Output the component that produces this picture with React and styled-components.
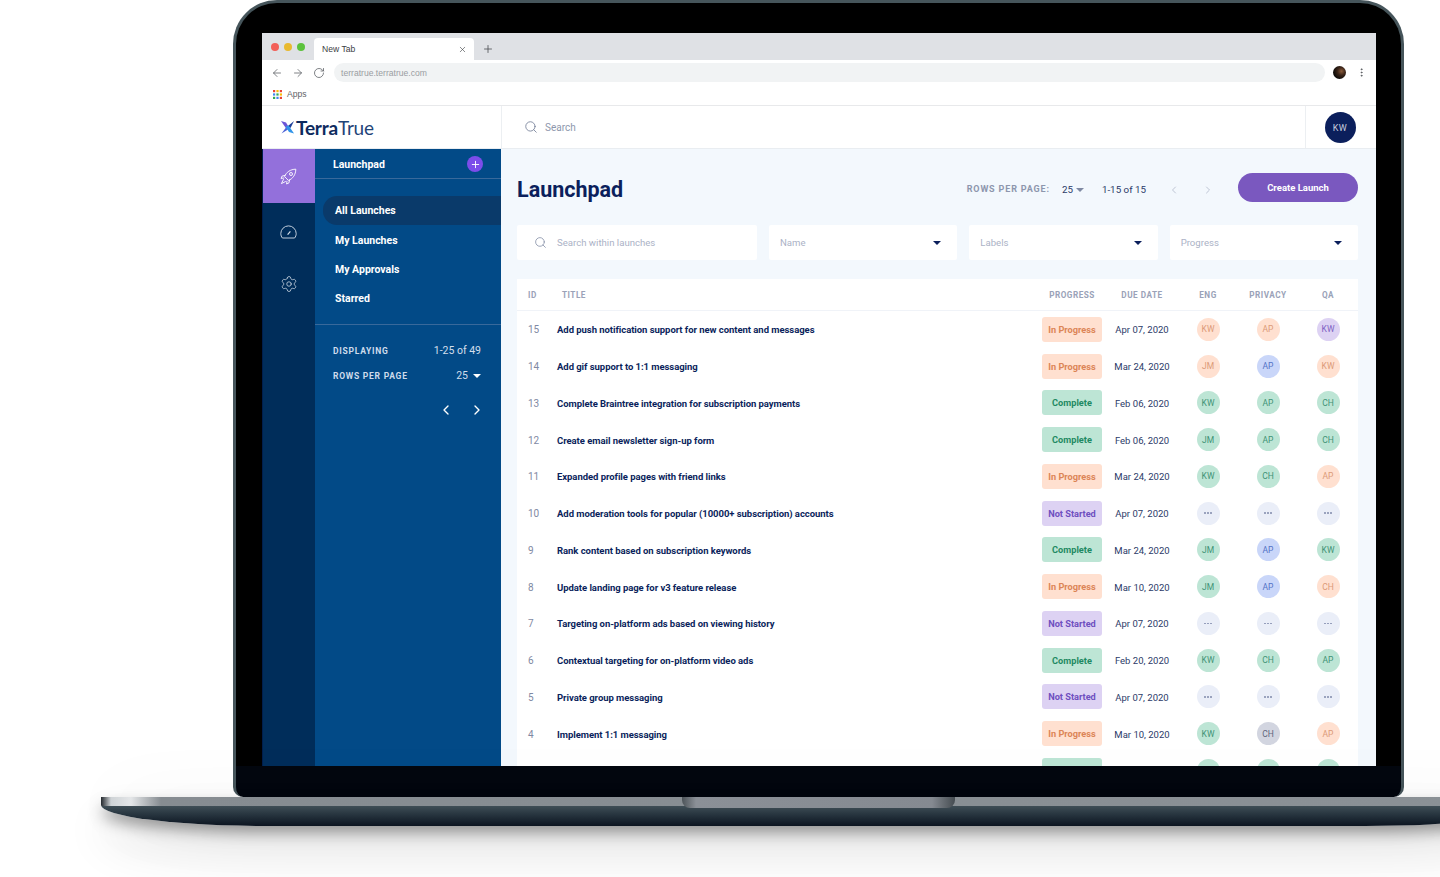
import React from 'react'
import styled, { createGlobalStyle } from 'styled-components'
import {
  ArrowLeft,
  ArrowRight,
  RotateCw,
  X,
  Plus,
  MoreVertical,
  Search,
  Settings,
  ChevronLeft,
  ChevronRight,
} from 'lucide-react'

const Global = createGlobalStyle`
  html, body {
    margin: 0;
    background: #fff;
    overflow: hidden;
  }
  * { box-sizing: border-box; }
`

const FONT = `Roboto, "Open Sans", sans-serif`
const NAVY = '#0b1f5c'

const Stage = styled.div`
  width: 1440px;
  height: 877px;
  overflow: hidden;
  font-family: ${FONT};
  display: flex;
  flex-direction: column;
`

const Lid = styled.div`
  width: 1171px;
  height: 797px;
  margin-left: 233px;
  flex-shrink: 0;
  padding: 30px 25px 31px 26px;
  border: 3px solid #46555b;
  border-bottom: none;
  border-radius: 44px 44px 10px 10px;
  background: linear-gradient(#000 0, #000 763px, #03070f 763px);
`

const Screen = styled.div`
  height: 733px;
  background: #fff;
  display: flex;
  flex-direction: column;
  overflow: hidden;
`

const Base = styled.div`
  width: 1434px;
  height: 29px;
  margin-left: 101px;
  flex-shrink: 0;
  display: flex;
  justify-content: center;
  border-radius: 0 0 170px 170px / 0 0 21px 21px;
  background:
    linear-gradient(90deg, #23282d 0, #cfd3d6 10px, #e4e6e8 30px, #868c91 60px, #8b9196 100%) top / 100% 9px no-repeat,
    linear-gradient(#3f4e56 9px, #2b3943 16px, #0b1420 100%);
  box-shadow:
    0 8px 16px -2px rgba(0, 0, 0, 0.42),
    0 26px 46px rgba(0, 0, 0, 0.12),
    0 0 70px rgba(0, 0, 0, 0.05);
`

const Hinge = styled.div`
  width: 273px;
  height: 11px;
  border-radius: 0 0 8px 8px;
  background: linear-gradient(90deg, #4d5459 0, #8b9097 14px, #858a91 250px, #454c51 100%);
`

/* browser chrome */
const TabStrip = styled.div`
  height: 27px;
  flex-shrink: 0;
  background: #dfe1e5;
  display: flex;
  align-items: flex-end;
  padding-left: 9px;
`

const Lights = styled.div`
  display: flex;
  gap: 5px;
  width: 43px;
  align-self: flex-start;
  margin-top: 10px;
`

const Light = styled.span`
  width: 8px;
  height: 8px;
  border-radius: 50%;
  background: ${(p) => p.$color};
`

const Tab = styled.div`
  width: 160px;
  height: 22px;
  background: #fff;
  border-radius: 4px 4px 0 0;
  padding: 0 7px 0 8px;
  display: flex;
  align-items: center;
  justify-content: space-between;
  font: 8.6px 'Liberation Sans', sans-serif;
  color: #3c4043;
`

const NewTab = styled.div`
  width: 28px;
  height: 22px;
  display: flex;
  align-items: center;
  justify-content: center;
  color: #4a4d52;
`

const Toolbar = styled.div`
  height: 25px;
  flex-shrink: 0;
  display: flex;
  align-items: center;
  padding-left: 9px;
  color: #5f6368;
`

const NavIcons = styled.div`
  width: 63px;
  display: flex;
  gap: 9px;
`

const Url = styled.div`
  width: 991px;
  height: 19px;
  border-radius: 10px;
  background: #f1f3f4;
  padding-left: 7px;
  display: flex;
  align-items: center;
  font: 8.6px 'Liberation Sans', sans-serif;
  color: #9a9da2;
`

const Profile = styled.span`
  width: 13px;
  height: 13px;
  margin-left: 8px;
  border-radius: 50%;
  background: radial-gradient(circle at 65% 40%, #8a5a3a 0, #3a2418 35%, #0d0a08 70%);
`

const Kebab = styled.div`
  margin-left: 10px;
  display: flex;
  color: #55585c;
`

const Bookmarks = styled.div`
  height: 21px;
  flex-shrink: 0;
  display: flex;
  align-items: center;
  gap: 5px;
  padding: 0 0 2px 11px;
  font: 8.6px 'Liberation Sans', sans-serif;
  color: #5f6368;
  border-bottom: 1px solid #e8e9eb;
`

/* app header */
const AppHeader = styled.header`
  height: 43px;
  flex-shrink: 0;
  display: flex;
  border-bottom: 1px solid #e9edf1;
`

const LogoCell = styled.div`
  width: 240px;
  display: flex;
  align-items: center;
  gap: 2px;
  padding-left: 19px;
  border-right: 1px solid #eceff2;
`

const LogoText = styled.span`
  font-family: Lato, sans-serif;
  font-size: 19px;
  line-height: 1;
  color: #0d2a5e;
  letter-spacing: -0.2px;
  b { font-weight: 700; }
  span { font-weight: 400; color: #1f4478; }
`

const HeaderSearch = styled.div`
  flex: 1;
  display: flex;
  align-items: center;
  gap: 7px;
  padding-left: 22px;
  font-size: 10px;
  color: #8e97ad;
`

const UserCell = styled.div`
  width: 71px;
  display: flex;
  align-items: center;
  justify-content: center;
  padding: 1px 2px 0 0;
  border-left: 1px solid #eceff2;
`

const UserAvatar = styled.div`
  width: 31px;
  height: 31px;
  border-radius: 50%;
  background: ${NAVY};
  color: #c4cbdc;
  font-size: 9px;
  letter-spacing: 0.5px;
  display: flex;
  align-items: center;
  justify-content: center;
`

/* app body */
const AppBody = styled.div`
  flex: 1;
  min-height: 0;
  display: flex;
`

const Rail = styled.nav`
  width: 53px;
  flex-shrink: 0;
  background: #002d5a;
  border-left: 1px solid #001e4d;
  display: flex;
  flex-direction: column;
  align-items: center;
  color: #d5dfea;
`

const RailItem = styled.div`
  width: 100%;
  height: ${(p) => (p.$active ? 54 : 52)}px;
  padding-right: 1px;
  display: flex;
  align-items: center;
  justify-content: center;
  background: ${(p) => (p.$active ? '#9370db' : 'transparent')};
`

const RailSpacer = styled.div`
  height: 3px;
`

const Panel = styled.aside`
  width: 186px;
  flex-shrink: 0;
  background: #024a87;
  color: #fff;
`

const PanelHead = styled.div`
  height: 30px;
  padding: 1px 18px 0;
  display: flex;
  align-items: center;
  justify-content: space-between;
  border-bottom: 1px solid #39699b;
  font-size: 10.5px;
  font-weight: 700;
`

const PlusBadge = styled.span`
  width: 16px;
  height: 16px;
  border-radius: 50%;
  background: #7c4dea;
  display: flex;
  align-items: center;
  justify-content: center;
`

const NavList = styled.div`
  padding: 17px 0 10px 8px;
  border-bottom: 1px solid #39699b;
  display: flex;
  flex-direction: column;
`

const NavItem = styled.div`
  height: 29.4px;
  padding-left: 12px;
  display: flex;
  align-items: center;
  font-size: 10.5px;
  font-weight: 700;
  border-radius: 14px 0 0 14px;
  background: ${(p) => (p.$active ? '#0a3a6a' : 'transparent')};
`

const Meta = styled.div`
  padding: 18px 20px 0 18px;
  display: flex;
  flex-direction: column;
  gap: 9px;
`

const MetaRow = styled.div`
  height: 16px;
  display: flex;
  align-items: center;
  justify-content: space-between;
  font-size: 10.5px;
  color: #d2deeb;
`

const MetaLabel = styled.span`
  font-size: 8.5px;
  font-weight: 700;
  letter-spacing: 0.75px;
  color: #cfdcec;
`

const Caret = styled.span`
  display: inline-block;
  width: 0;
  height: 0;
  margin-left: ${(p) => p.$gap ?? 5}px;
  vertical-align: middle;
  border-left: 4px solid transparent;
  border-right: 4px solid transparent;
  border-top: 4px solid ${(p) => p.$color ?? NAVY};
`

const PanelArrows = styled.div`
  margin-top: 18px;
  padding-right: 16px;
  display: flex;
  justify-content: flex-end;
  gap: 15px;
`

/* main */
const Main = styled.main`
  flex: 1;
  min-width: 0;
  background: #f3f8fd;
  padding: 24px 18px 0 16px;
`

const TopRow = styled.div`
  height: 32px;
  display: flex;
  align-items: center;
`

const Title = styled.h1`
  margin: 0;
  flex: 1;
  font-size: 21.5px;
  font-weight: 700;
  color: ${NAVY};
`

const PagerLabel = styled.span`
  font-size: 9px;
  font-weight: 700;
  letter-spacing: 0.85px;
  color: #8d96ad;
`

const PagerValue = styled.span`
  font-size: 9.8px;
  color: #2b3a68;
  margin-left: ${(p) => p.$gap}px;
`

const PagerArrows = styled.div`
  display: flex;
  gap: 22px;
  margin: 2px 24px 0 22px;
  color: #b0b7c9;
`

const CreateButton = styled.button`
  align-self: flex-start;
  width: 120px;
  height: 29px;
  border: none;
  border-radius: 15px;
  background: #7a58bf;
  color: #fff;
  font-family: ${FONT};
  font-size: 9.5px;
  font-weight: 700;
`

const Filters = styled.div`
  margin-top: 20px;
  display: grid;
  grid-template-columns: 240px 1fr 1fr 1fr;
  gap: 12px;
`

const Filter = styled.div`
  height: 35px;
  padding: 0 ${(p) => (p.$search ? 0 : 16)}px 0 ${(p) => (p.$search ? 17 : 11)}px;
  background: #fff;
  border-radius: 2px;
  display: flex;
  align-items: center;
  justify-content: ${(p) => (p.$search ? 'flex-start' : 'space-between')};
  gap: 10px;
  font-size: 9.6px;
  color: #abb2c6;
`

const Table = styled.section`
  margin-top: 19px;
  background: #fff;
`

const HeadRow = styled.div`
  height: 32px;
  padding: 1px 0 0 11px;
  display: grid;
  grid-template-columns: 29px 1fr 60px 76px 60px 60px 60px;
  align-items: center;
  border-bottom: 1px solid #f0f3f8;
  font-size: 8.2px;
  font-weight: 700;
  letter-spacing: 0.5px;
  color: #9aa2b8;
`

const HeadCell = styled.div`
  text-align: center;
  white-space: nowrap;
`

const HeadTitle = styled.div`
  padding-left: 5px;
`

const HeadDate = styled(HeadCell)`
  padding-left: 4px;
`

const Row = styled.div`
  height: 36.75px;
  padding-left: 11px;
  display: grid;
  grid-template-columns: 29px 1fr 60px 76px 60px 60px 60px;
  align-items: center;
`

const RowId = styled.div`
  padding-top: 1px;
  font-size: 10px;
  color: #7f89a3;
`

const RowTitle = styled.div`
  padding-top: 1px;
  font-size: 9.5px;
  font-weight: 700;
  letter-spacing: -0.05px;
  color: ${NAVY};
  white-space: nowrap;
`

const BADGES = {
  'In Progress': { bg: '#ffe0d0', fg: '#dc8557' },
  Complete: { bg: '#bde5d5', fg: '#1f8a63' },
  'Not Started': { bg: '#ddd2f3', fg: '#6f4fc0' },
}

const Badge = styled.div`
  height: 25px;
  border-radius: 3px;
  background: ${(p) => BADGES[p.$status].bg};
  color: ${(p) => BADGES[p.$status].fg};
  font-size: 9.2px;
  font-weight: 700;
  white-space: nowrap;
  display: flex;
  align-items: center;
  justify-content: center;
`

const DueDate = styled.div`
  padding: 1px 0 0 4px;
  text-align: center;
  font-size: 9.5px;
  color: #2b3a68;
  white-space: nowrap;
`

const AVATARS = {
  o: { bg: '#ffe0d0', fg: '#dc9a78' },
  p: { bg: '#ddd2f3', fg: '#7d62c4' },
  b: { bg: '#c9d6f9', fg: '#5373c6' },
  g: { bg: '#bde5d5', fg: '#3f9376' },
  s: { bg: '#d2d5e0', fg: '#5f667c' },
  e: { bg: '#eaeef8', fg: '#8a94b3' },
}

const Avatar = styled.div`
  justify-self: center;
  width: 23px;
  height: 23px;
  border-radius: 50%;
  background: ${(p) => AVATARS[p.$tone].bg};
  color: ${(p) => AVATARS[p.$tone].fg};
  font-size: 8.5px;
  display: flex;
  align-items: center;
  justify-content: center;
  gap: 1.5px;
`

const Dot = styled.span`
  width: 1.6px;
  height: 1.6px;
  border-radius: 50%;
  background: currentColor;
`

const EMPTY = [[null, 'e'], [null, 'e'], [null, 'e']]

const LAUNCHES = [
  { id: 15, title: 'Add push notification support for new content and messages', status: 'In Progress', due: 'Apr 07, 2020', people: [['KW', 'o'], ['AP', 'o'], ['KW', 'p']] },
  { id: 14, title: 'Add gif support to 1:1 messaging', status: 'In Progress', due: 'Mar 24, 2020', people: [['JM', 'o'], ['AP', 'b'], ['KW', 'o']] },
  { id: 13, title: 'Complete Braintree integration for subscription payments', status: 'Complete', due: 'Feb 06, 2020', people: [['KW', 'g'], ['AP', 'g'], ['CH', 'g']] },
  { id: 12, title: 'Create email newsletter sign-up form', status: 'Complete', due: 'Feb 06, 2020', people: [['JM', 'g'], ['AP', 'g'], ['CH', 'g']] },
  { id: 11, title: 'Expanded profile pages with friend links', status: 'In Progress', due: 'Mar 24, 2020', people: [['KW', 'g'], ['CH', 'g'], ['AP', 'o']] },
  { id: 10, title: 'Add moderation tools for popular (10000+ subscription) accounts', status: 'Not Started', due: 'Apr 07, 2020', people: EMPTY },
  { id: 9, title: 'Rank content based on subscription keywords', status: 'Complete', due: 'Mar 24, 2020', people: [['JM', 'g'], ['AP', 'b'], ['KW', 'g']] },
  { id: 8, title: 'Update landing page for v3 feature release', status: 'In Progress', due: 'Mar 10, 2020', people: [['JM', 'g'], ['AP', 'b'], ['CH', 'o']] },
  { id: 7, title: 'Targeting on-platform ads based on viewing history', status: 'Not Started', due: 'Apr 07, 2020', people: EMPTY },
  { id: 6, title: 'Contextual targeting for on-platform video ads', status: 'Complete', due: 'Feb 20, 2020', people: [['KW', 'g'], ['CH', 'g'], ['AP', 'g']] },
  { id: 5, title: 'Private group messaging', status: 'Not Started', due: 'Apr 07, 2020', people: EMPTY },
  { id: 4, title: 'Implement 1:1 messaging', status: 'In Progress', due: 'Mar 10, 2020', people: [['KW', 'g'], ['CH', 's'], ['AP', 'o']] },
  { id: 3, title: '', status: 'Complete', due: '', people: [['', 'g'], ['', 'g'], ['', 'g']] },
]

const LogoMark = () => (
  <svg width="13" height="13" viewBox="0 0 13 13">
    <path d="M13 0 L9.5 7 L7 5 Z" fill="#1d3f9a" />
    <path d="M0.5 12.5 L5 6.5 L7 8.5 Z" fill="#4c62d8" />
    <path d="M0 0 L5 1.5 L8 6.5 L5.5 8 Z" fill="#6c55d6" />
    <path d="M13 12.5 L8 11 L4.5 5.5 L7.5 4.5 Z" fill="#2f93e8" />
  </svg>
)

const APP_COLORS = ['#ea4335', '#fbbc05', '#ea4335', '#4285f4', '#34a853', '#fbbc05', '#34a853', '#4285f4', '#ea4335']

const AppsIcon = () => (
  <svg width="9" height="9" viewBox="0 0 9 9">
    {APP_COLORS.map((c, i) => (
      <rect key={i} x={(i % 3) * 3.4} y={Math.floor(i / 3) * 3.4} width="2.2" height="2.2" fill={c} />
    ))}
  </svg>
)

const RocketIcon = () => (
  <svg width="17" height="17" viewBox="0 0 17 17" fill="none" stroke="#fff" strokeWidth="0.9" strokeLinejoin="round">
    <path d="M4.6 8.6 C6 4.4 10.4 1.2 15.8 1.2 C15.8 6.6 12.6 11 8.4 12.4 Z" />
    <circle cx="11" cy="6" r="1.5" />
    <path d="M5.4 7.4 L2.2 8 L1 10.4 L4.2 10" />
    <path d="M9.6 11.6 L9 14.8 L6.6 16 L7 12.8" />
    <path d="M3.6 11.2 L1.4 15.6 L5.8 13.4" />
  </svg>
)

const DialIcon = () => (
  <svg width="17" height="14" viewBox="0 0 17 14" fill="none" stroke="currentColor" strokeWidth="0.9" strokeLinejoin="round">
    <path d="M2.4 13 C1.4 11.8 0.8 10.2 0.8 8.6 A7.7 7.7 0 0 1 16.2 8.6 C16.2 10.2 15.6 11.8 14.6 13 Z" />
    <path d="M7.6 9.6 L10.4 6.4" strokeWidth="1.2" />
  </svg>
)

export default function App() {
  return (
    <Stage>
      <Global />
      <Lid>
        <Screen>
          <TabStrip>
            <Lights>
              <Light $color="#f25f58" />
              <Light $color="#e8b92f" />
              <Light $color="#5cc23c" />
            </Lights>
            <Tab>
              New Tab
              <X size={9} strokeWidth={1.6} />
            </Tab>
            <NewTab>
              <Plus size={12} strokeWidth={1.6} />
            </NewTab>
          </TabStrip>
          <Toolbar>
            <NavIcons>
              <ArrowLeft size={12} strokeWidth={1.6} />
              <ArrowRight size={12} strokeWidth={1.6} />
              <RotateCw size={12} strokeWidth={1.6} />
            </NavIcons>
            <Url>terratrue.terratrue.com</Url>
            <Profile />
            <Kebab>
              <MoreVertical size={11} strokeWidth={2} />
            </Kebab>
          </Toolbar>
          <Bookmarks>
            <AppsIcon />
            Apps
          </Bookmarks>
          <AppHeader>
            <LogoCell>
              <LogoMark />
              <LogoText>
                <b>Terra</b>
                <span>True</span>
              </LogoText>
            </LogoCell>
            <HeaderSearch>
              <Search size={14} strokeWidth={1.4} color="#6f7a94" />
              Search
            </HeaderSearch>
            <UserCell>
              <UserAvatar>KW</UserAvatar>
            </UserCell>
          </AppHeader>
          <AppBody>
            <Rail>
              <RailItem $active>
                <RocketIcon />
              </RailItem>
              <RailSpacer />
              <RailItem>
                <DialIcon />
              </RailItem>
              <RailItem>
                <Settings size={18} strokeWidth={1} />
              </RailItem>
            </Rail>
            <Panel>
              <PanelHead>
                Launchpad
                <PlusBadge>
                  <Plus size={11} strokeWidth={2} color="#fff" />
                </PlusBadge>
              </PanelHead>
              <NavList>
                <NavItem $active>All Launches</NavItem>
                <NavItem>My Launches</NavItem>
                <NavItem>My Approvals</NavItem>
                <NavItem>Starred</NavItem>
              </NavList>
              <Meta>
                <MetaRow>
                  <MetaLabel>DISPLAYING</MetaLabel>
                  <span>1-25 of 49</span>
                </MetaRow>
                <MetaRow>
                  <MetaLabel>ROWS PER PAGE</MetaLabel>
                  <span>
                    25
                    <Caret $color="#fff" />
                  </span>
                </MetaRow>
              </Meta>
              <PanelArrows>
                <ChevronLeft size={16} strokeWidth={2} />
                <ChevronRight size={16} strokeWidth={2} />
              </PanelArrows>
            </Panel>
            <Main>
              <TopRow>
                <Title>Launchpad</Title>
                <PagerLabel>ROWS PER PAGE:</PagerLabel>
                <PagerValue $gap={12}>
                  25
                  <Caret $color="#7f89a3" $gap={3} />
                </PagerValue>
                <PagerValue $gap={18}>1-15 of 15</PagerValue>
                <PagerArrows>
                  <ChevronLeft size={12} strokeWidth={1.6} />
                  <ChevronRight size={12} strokeWidth={1.6} />
                </PagerArrows>
                <CreateButton>Create Launch</CreateButton>
              </TopRow>
              <Filters>
                <Filter $search>
                  <Search size={13} strokeWidth={1.4} color="#7f89a3" />
                  Search within launches
                </Filter>
                <Filter>
                  Name
                  <Caret />
                </Filter>
                <Filter>
                  Labels
                  <Caret />
                </Filter>
                <Filter>
                  Progress
                  <Caret />
                </Filter>
              </Filters>
              <Table>
                <HeadRow>
                  <div>ID</div>
                  <HeadTitle>TITLE</HeadTitle>
                  <HeadCell>PROGRESS</HeadCell>
                  <HeadDate>DUE DATE</HeadDate>
                  <HeadCell>ENG</HeadCell>
                  <HeadCell>PRIVACY</HeadCell>
                  <HeadCell>QA</HeadCell>
                </HeadRow>
                {LAUNCHES.map((l) => (
                  <Row key={l.id}>
                    <RowId>{l.id === 3 ? '' : l.id}</RowId>
                    <RowTitle>{l.title}</RowTitle>
                    <Badge $status={l.status}>{l.id === 3 ? '' : l.status}</Badge>
                    <DueDate>{l.due}</DueDate>
                    {l.people.map(([name, tone], i) => (
                      <Avatar key={i} $tone={tone}>
                        {name === null ? (
                          <>
                            <Dot />
                            <Dot />
                            <Dot />
                          </>
                        ) : (
                          name
                        )}
                      </Avatar>
                    ))}
                  </Row>
                ))}
              </Table>
            </Main>
          </AppBody>
        </Screen>
      </Lid>
      <Base>
        <Hinge />
      </Base>
    </Stage>
  )
}
